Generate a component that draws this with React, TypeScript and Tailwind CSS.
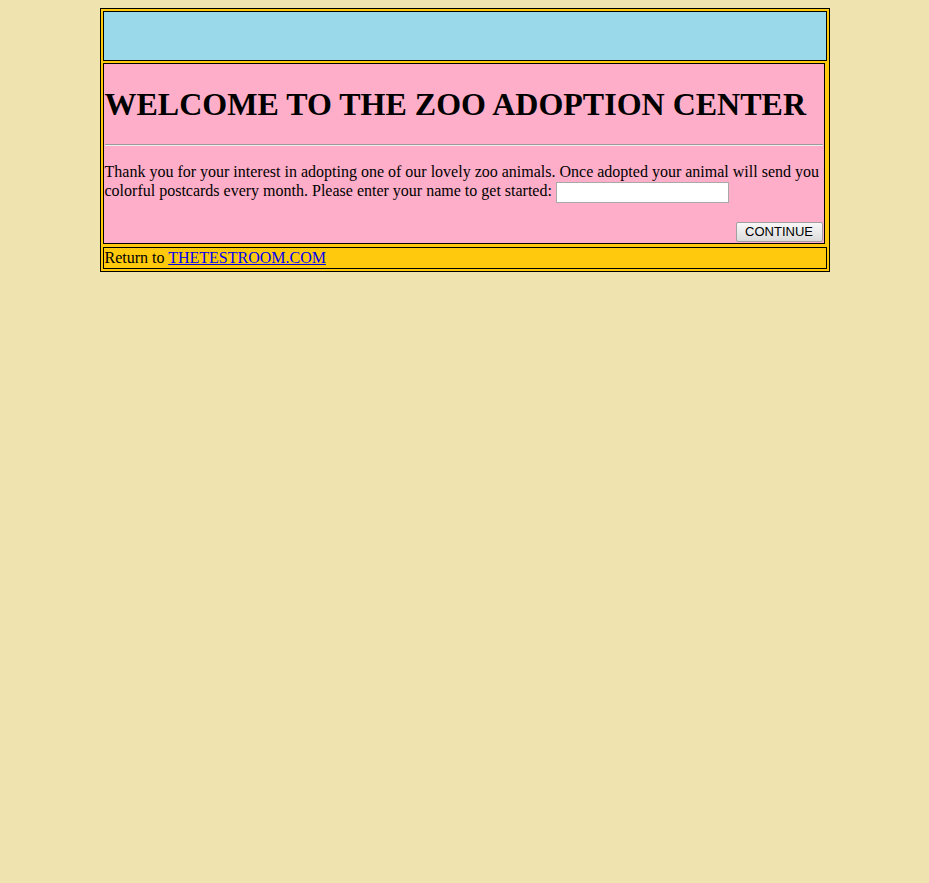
export default function App() {
  return (
    <div className="min-h-[883px] bg-[#EFE4B0] pt-[8px] font-['Liberation_Serif',serif] text-[16px] text-black">
      <div className="mx-auto flex w-[730px] flex-col border border-black bg-[#FFC90E] p-[2px]">
        <div className="h-[50px] border border-black bg-[#99D9EA]" />

        <div className="mt-[2px] mr-[2px] h-[181px] border border-black bg-[#FFAEC9] px-[1px] pt-[1px]">
          <h1 className="mt-[21px] mb-[21px] text-[32px] leading-[37px] font-bold">
            WELCOME TO THE ZOO ADOPTION CENTER
          </h1>
          <hr className="border-t border-b border-t-[#9a9a9a] border-b-[#eeeeee]" />
          <p className="mt-[16px] leading-[19px]">
            Thank you for your interest in adopting one of our lovely zoo animals. Once adopted your animal will
            send you colorful postcards every month. Please enter your name to get started:{" "}
            <input
              type="text"
              className="h-[21px] w-[173px] border border-[#a9a9a9] bg-white align-middle text-[13px] outline-none"
            />
          </p>
          <div className="mt-[19px] flex justify-end">
            <button
              type="button"
              className="h-[20px] w-[87px] rounded-[2px] border border-[#a0a0a0] bg-gradient-to-b from-[#f8f8f8] to-[#dcdcdc] font-['Liberation_Sans',Arial,sans-serif] text-[13px] leading-none text-black"
            >
              CONTINUE
            </button>
          </div>
        </div>

        <div className="mt-[3px] h-[22px] border border-black px-[1px] leading-[20px]">
          Return to{" "}
          <a href="#" className="text-[#0000EE] underline">
            THETESTROOM.COM
          </a>
        </div>
      </div>
    </div>
  )
}
